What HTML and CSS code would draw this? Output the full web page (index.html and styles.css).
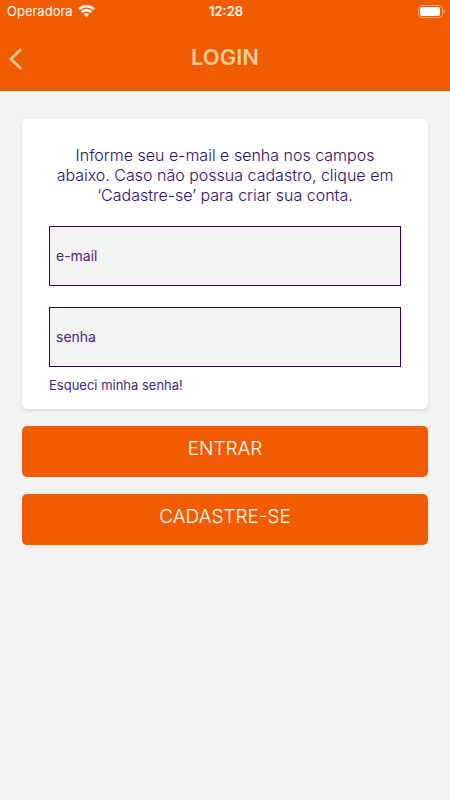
FILE: index.html
```html
<!DOCTYPE html>
<html lang="pt-BR">
<head>
    <meta charset="UTF-8">
    <meta name="viewport" content="width=device-width, initial-scale=1.0">
    <title>Login</title>
    <link rel="stylesheet" href="styles.css">
</head>
<body>

<header class="header">
    <div class="status-bar">
        <div class="carrier">
            <span>Operadora</span>
            <svg width="17" height="12" viewBox="0 0 17 12" fill="none" stroke="#fff" stroke-width="2.4">
                <path d="M1 4.4a10.6 10.6 0 0 1 15 0"/>
                <path d="M3.7 7.2a6.8 6.8 0 0 1 9.6 0"/>
                <path d="M8.5 12L5.9 9.3a3.7 3.7 0 0 1 5.2 0z" fill="#fff" stroke="none"/>
            </svg>
        </div>
        <span class="time">12:28</span>
        <svg class="battery" width="27" height="13" viewBox="0 0 27 13">
            <rect x="0.5" y="0.5" width="24" height="12" rx="3.5" fill="none" stroke="#fff" stroke-opacity="0.45"/>
            <rect x="2" y="2" width="20" height="9" rx="2" fill="#fff"/>
            <path d="M25.6 4.5a2.2 2.2 0 0 1 0 4z" fill="#fff" fill-opacity="0.5"/>
        </svg>
    </div>
    <div class="title-bar">
        <button type="button" class="back" aria-label="Voltar">
            <svg width="14" height="22" viewBox="0 0 14 22" fill="none" stroke="#f4cb95" stroke-width="2.6" stroke-linecap="round" stroke-linejoin="round">
                <path d="M11.5 1.8L1.9 11l9.6 9.2"/>
            </svg>
        </button>
        <h1>LOGIN</h1>
    </div>
</header>

<main>
    <form id="login" class="card">
        <p>Informe seu e-mail e senha nos campos abaixo. Caso não possua cadastro, clique em ‘Cadastre-se’ para criar sua conta.</p>
        <input type="email" id="email" name="email" placeholder="e-mail" aria-label="e-mail">
        <input type="password" id="senha" name="senha" placeholder="senha" aria-label="senha">
        <a href="#" class="forgot">Esqueci minha senha!</a>
    </form>
    <button type="submit" form="login" class="btn">ENTRAR</button>
    <button type="button" class="btn">CADASTRE-SE</button>
</main>

</body>
</html>
```
FILE: styles.css
```css
* {
    box-sizing: border-box;
}
body {
    margin: 0;
    background-color: #f3f3f3;
    color: #35096b;
    font-family: Inter, sans-serif;
}
.header {
    background-color: #f25c00;
    color: white;
}
.status-bar {
    display: grid;
    grid-template-columns: 1fr auto 1fr;
    align-items: center;
    height: 22px;
    padding: 0 5px 0 7px;
    font-size: 13px;
}
.carrier {
    display: flex;
    align-items: center;
    gap: 5px;
}
.time {
    font-weight: 600;
}
.battery {
    justify-self: end;
}
.title-bar {
    display: grid;
    grid-template-columns: 1fr auto 1fr;
    align-items: center;
    height: 69px;
    padding: 0 9px;
    color: #f4cb95;
}
.back {
    justify-self: start;
    display: flex;
    padding: 4px 0 0;
    border: none;
    background: none;
    cursor: pointer;
}
h1 {
    margin: 0;
    font-size: 22px;
    font-weight: 600;
    line-height: 24px;
}
main {
    display: flex;
    flex-direction: column;
    gap: 17px;
    padding: 28px 22px;
}
.card {
    display: flex;
    flex-direction: column;
    padding: 26px 27px 15px;
    background-color: white;
    border-radius: 5px;
    box-shadow: 0 2px 4px rgba(0, 0, 0, 0.12);
}
.card p {
    margin: 0 0 21px;
    font-size: 16px;
    font-weight: 300;
    line-height: 20px;
    text-align: center;
}
.card input {
    width: 100%;
    height: 60px;
    margin-bottom: 21px;
    padding: 0 6px 2px;
    border: 1px solid #2a0560;
    border-radius: 0;
    background-color: #f3f3f3;
    color: inherit;
    font-family: inherit;
    font-size: 14px;
}
.card input::placeholder {
    color: #4a2478;
}
.card input[type="password"] {
    margin-bottom: 10px;
}
.forgot {
    align-self: flex-start;
    color: #4a2478;
    font-size: 13px;
    line-height: 17px;
    text-decoration: none;
}
.btn {
    height: 51px;
    padding: 0 0 6px;
    border: none;
    border-radius: 5px;
    background-color: #f25c00;
    color: white;
    font-family: inherit;
    font-size: 19px;
    font-weight: 300;
    cursor: pointer;
}
```
